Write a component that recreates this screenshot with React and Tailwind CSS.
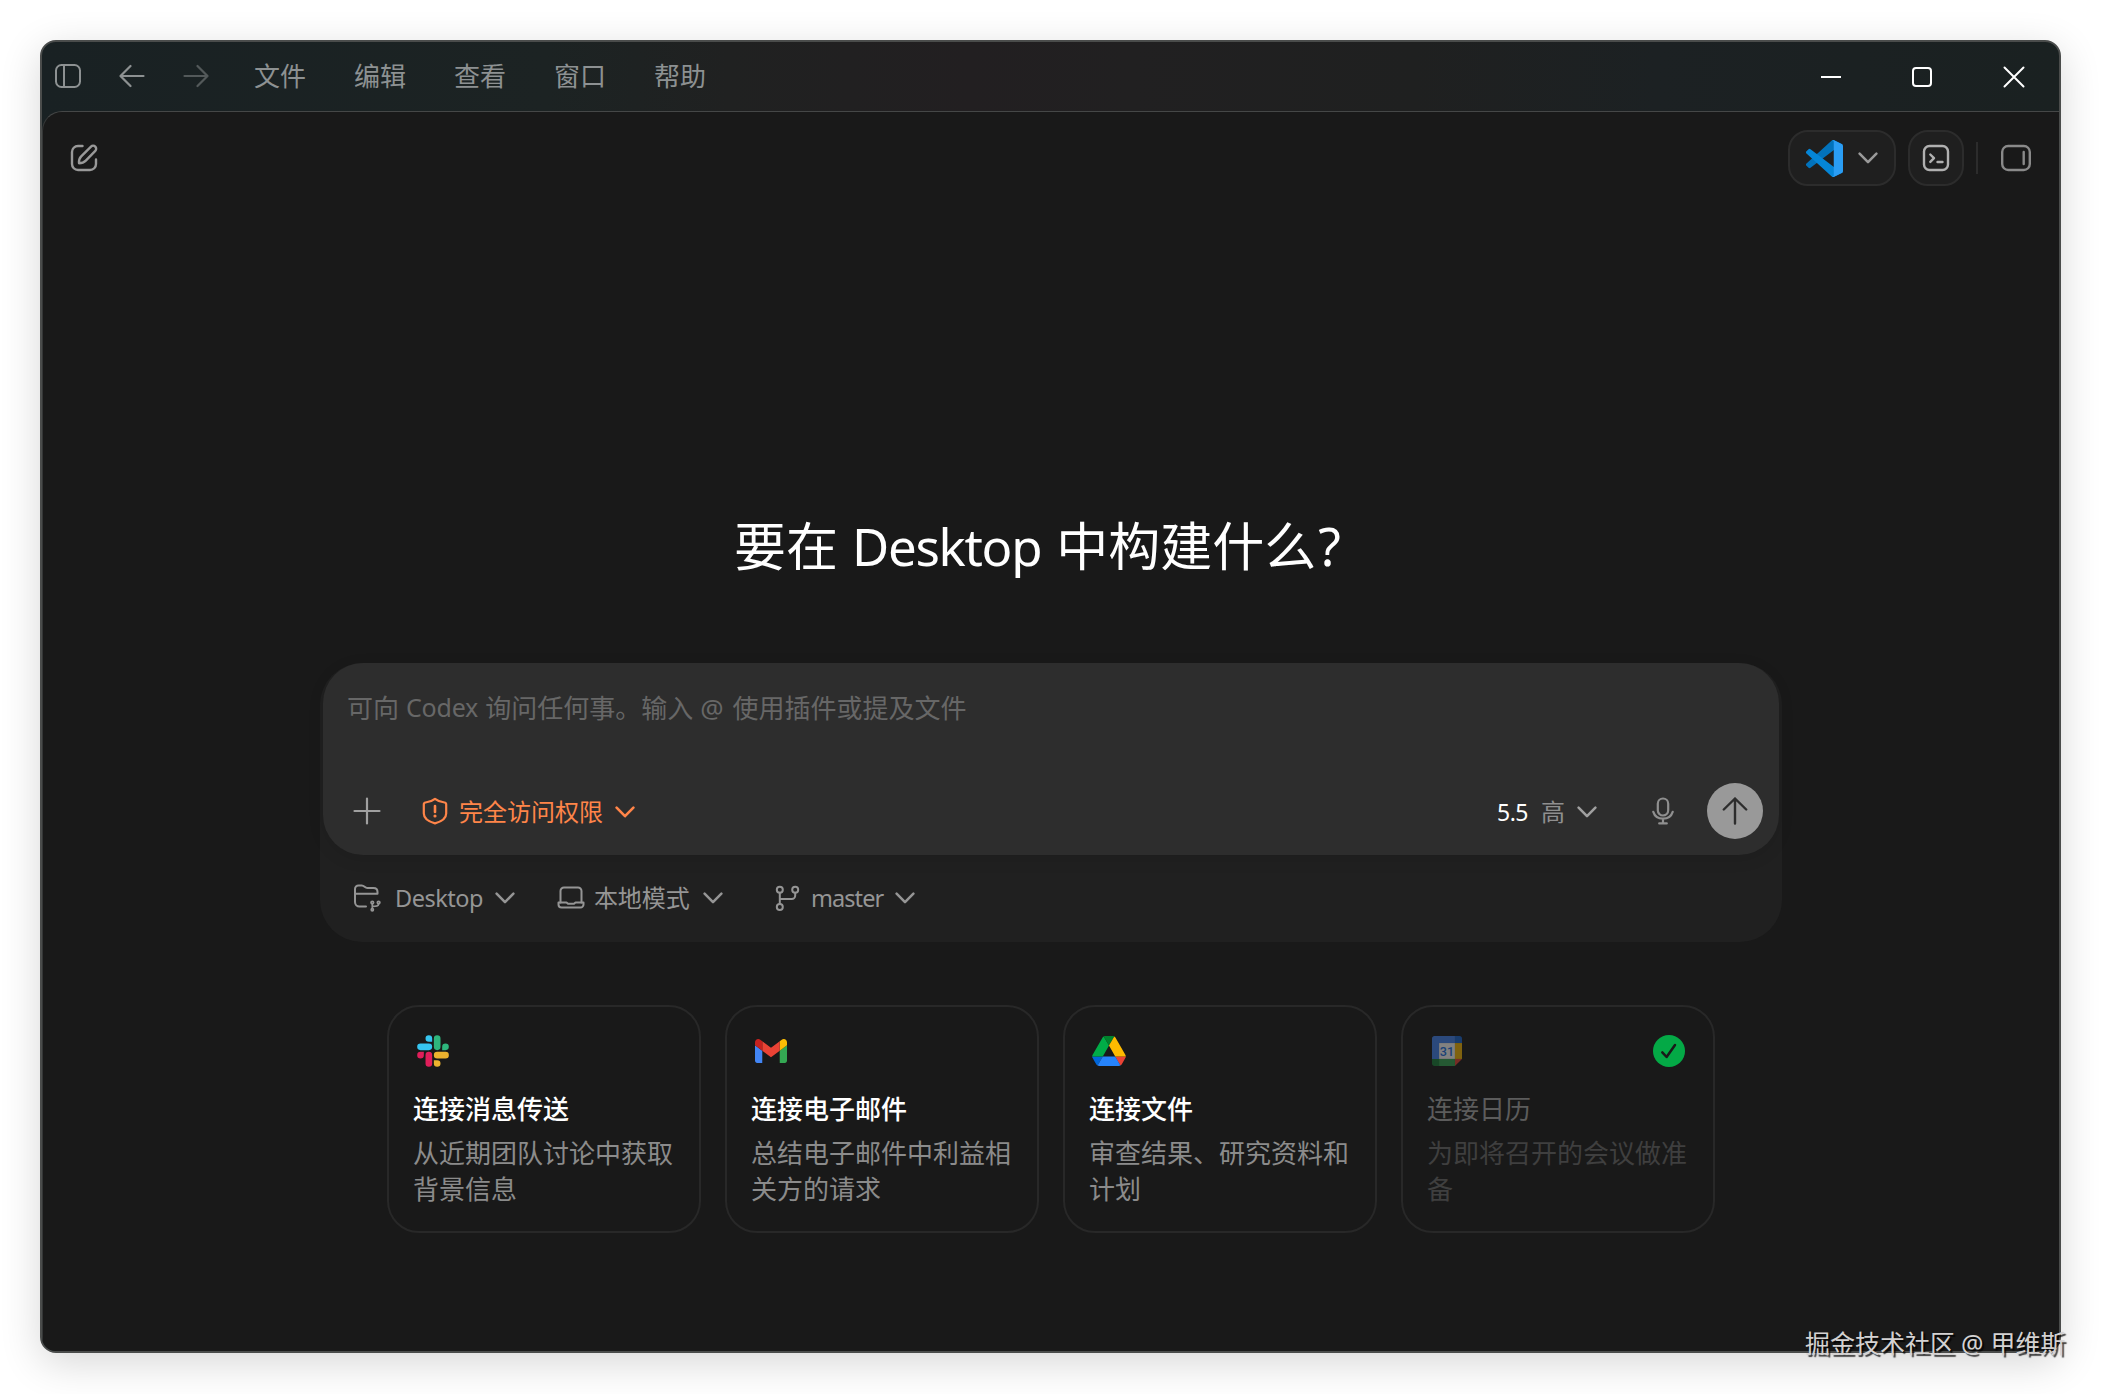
const CJK = "font-['Noto_Sans','Noto_Sans_CJK_SC',sans-serif]";

const Chevron = ({ w = 20, sw = 2.5, className = "" }) => (
  <svg width={w} height={w * 0.6} viewBox="0 0 20 12" fill="none" stroke="currentColor" strokeWidth={sw} strokeLinecap="round" strokeLinejoin="round" className={"shrink-0 " + className}>
    <path d="M1.6 1.6 10 10.2l8.400-8.600" />
  </svg>
);

const S = ({ w, h, children, sw = 2, className = "" }) => (
  <svg width={w} height={h} viewBox={`0 0 ${w} ${h}`} fill="none" stroke="currentColor" strokeWidth={sw} strokeLinecap="round" strokeLinejoin="round" className={"shrink-0 " + className}>
    {children}
  </svg>
);

const Sidebar = () => (
  <S w={28} h={26}>
    <rect x="2" y="2" width="24" height="22" rx="5.5" />
    <path d="M10 2v22" />
  </S>
);
const ArrowL = () => (
  <S w={26} h={24} sw={2.2}>
    <path d="M1.5 12h23M11.5 2 1.5 12l10 10" />
  </S>
);
const ArrowR = () => (
  <S w={26} h={24} sw={2.2}>
    <path d="M1.5 12h23M14.5 2l10 10-10 10" />
  </S>
);
const Compose = () => (
  <S w={30} h={30} sw={2.4}>
    <path d="M13.5 3H9a6 6 0 0 0-6 6v12a6 6 0 0 0 6 6h12a6 6 0 0 0 6-6v-4.5" />
    <path d="M10 20.200c-.3-3.200.5-5.200 2.200-6.900L22 3.600a2.900 2.900 0 0 1 4.300 4.200L16.800 17.600c-1.800 1.800-3.800 2.600-6.800 2.600z" />
  </S>
);
const VSCode = () => (
  <svg width="37" height="37" viewBox="0 0 100 100" className="shrink-0">
    <path fill="#0272bb" d="M96.500 10.800 75.900.9a6.200 6.200 0 0 0-7.100 1.200L1.300 63.600a4.200 4.200 0 0 0 0 6.200l5.500 5a4.200 4.200 0 0 0 5.400.2l81.200-61.600c2.700-2.100 6.600-.1 6.600 3.300v-.2a6.300 6.300 0 0 0-3.500-5.700z" />
    <path fill="#0585d6" d="m96.500 89.200-20.600 9.900a6.200 6.200 0 0 1-7.100-1.200L1.300 36.400a4.200 4.200 0 0 1 0-6.200l5.500-5a4.200 4.200 0 0 1 5.400-.2l81.200 61.600c2.700 2.100 6.600.1 6.600-3.300v.2a6.300 6.300 0 0 1-3.500 5.700z" />
    <path fill="#2a9df4" d="M75.900 99.100a6.200 6.200 0 0 1-7.100-1.200c2.300 2.300 6.200.7 6.200-2.600V4.700c0-3.300-3.900-4.900-6.200-2.600a6.200 6.200 0 0 1 7.100-1.200l20.600 9.900a6.300 6.300 0 0 1 3.500 5.700v67c0 2.400-1.400 4.600-3.500 5.700z" />
  </svg>
);
const Terminal = () => (
  <S w={28} h={28} sw={2.4}>
    <rect x="2" y="2" width="24" height="24" rx="5.500" />
    <path d="m8.300 10.500 3.700 3.700-3.700 3.700M15.500 18h5" />
  </S>
);
const RightPanel = () => (
  <S w={32} h={28} sw={2.400}>
    <rect x="2.200" y="2" width="27.600" height="24" rx="6" />
    <path d="M23.700 8v12" />
  </S>
);
const Shield = () => (
  <S w={26} h={28} sw={2.200}>
    <path d="M13 1.800c2.600 2 5.800 3.300 9.500 3.700 1 .1 1.700.9 1.700 1.900v9.100c0 4.700-4.500 8-11.200 9.900C6.300 24.500 1.800 21.200 1.800 16.500V7.400c0-1 .7-1.800 1.700-1.900C7.200 5.100 10.400 3.800 13 1.800z" />
    <path d="M13 9v6" strokeWidth="2.600" />
    <circle cx="13" cy="19" r=".9" fill="currentColor" strokeWidth="1.400" />
  </S>
);
const Mic = () => (
  <S w={22} h={28} sw={2.200}>
    <rect x="5.800" y="1.500" width="10.400" height="17" rx="5.200" />
    <path d="M1.300 14.800C2.600 19 6.200 21.600 11 21.600s8.400-2.600 9.700-6.800M11 21.600v4.800M7.200 26.400h7.600" />
  </S>
);
const Folder = () => (
  <S w={28} h={28}>
    <path d="M13 22.500H6.500A4.500 4.500 0 0 1 2 18V5a3.500 3.500 0 0 1 3.500-3.500h3.300c2.600 0 3 2.500 5.500 2.500h6.200c2.500 0 4 1.500 4 4v1.700H2" />
    <g strokeWidth="1.700">
      <circle cx="19.300" cy="18.600" r="1.300" />
      <circle cx="25.600" cy="18.600" r="1.300" />
      <circle cx="19.300" cy="25.800" r="1.100" />
      <path d="M19.300 20v4.500M25.600 20c0 2.200-2 2.400-6.200 2.400" />
    </g>
  </S>
);
const Laptop = () => (
  <S w={28} h={24}>
    <path d="M3.500 16.500V5A3.500 3.500 0 0 1 7 1.500h14A3.500 3.500 0 0 1 24.500 5v11.500" />
    <path d="M1.500 16.500h8l1.500 1.300h6l1.500-1.300h8v2a3 3 0 0 1-3 3h-19a3 3 0 0 1-3-3z" />
  </S>
);
const Branch = () => (
  <S w={25} h={27}>
    <circle cx="4.800" cy="4.800" r="3" />
    <circle cx="20.200" cy="4.800" r="3" />
    <circle cx="4.800" cy="22" r="3" />
    <path d="M4.800 7.800v11.200M20.200 7.800v2.700a3.500 3.500 0 0 1-3.500 3.500H4.800" />
  </S>
);

const Slack = () => (
  <svg width="32" height="32" viewBox="0 0 127 127" className="shrink-0">
    <path fill="#E01E5A" d="M27.200 80a13.200 13.200 0 1 1-13.200-13.200h13.200zM33.800 80a13.200 13.200 0 0 1 26.400 0v33a13.200 13.200 0 0 1-26.400 0z" />
    <path fill="#36C5F0" d="M47 27a13.200 13.200 0 1 1 13.200-13.200V27zM47 33.700a13.200 13.200 0 0 1 0 26.400H13.900a13.200 13.200 0 0 1 0-26.400z" />
    <path fill="#2EB67D" d="M99.900 46.900a13.200 13.200 0 1 1 13.200 13.200H99.900zM93.300 46.900a13.200 13.200 0 0 1-26.400 0V13.800a13.200 13.200 0 0 1 26.400 0z" />
    <path fill="#ECB22E" d="M80.100 99.800A13.200 13.200 0 1 1 66.900 113V99.800zM80.100 93.200a13.200 13.200 0 0 1 0-26.400h33.100a13.200 13.200 0 0 1 0 26.400z" />
  </svg>
);
const Gmail = () => (
  <svg width="32" height="24" viewBox="52 42 88 66" className="shrink-0">
    <path fill="#4285f4" d="M58 108h14V74L52 59v43c0 3.320 2.690 6 6 6" />
    <path fill="#34a853" d="M120 108h14c3.320 0 6-2.690 6-6V59l-20 15" />
    <path fill="#fbbc04" d="M120 48v26l20-15v-8c0-7.420-8.470-11.650-14.400-7.200" />
    <path fill="#ea4335" d="M72 74V48l24 18 24-18v26L96 92" />
    <path fill="#c5221f" d="M52 51v8l20 15V48l-5.600-4.200c-5.940-4.450-14.400-.22-14.400 7.200" />
  </svg>
);
const Drive = () => (
  <svg width="34" height="30" viewBox="0 0 87.3 78" className="shrink-0">
    <path fill="#0066da" d="m6.600 66.850 3.850 6.650c.8 1.400 1.950 2.500 3.300 3.300L27.500 53H0c0 1.550.4 3.100 1.200 4.500z" />
    <path fill="#00ac47" d="M43.650 25 29.900 1.200c-1.350.8-2.500 1.900-3.300 3.300l-25.400 44A9.060 9.060 0 0 0 0 53h27.500z" />
    <path fill="#ea4335" d="M73.550 76.800c1.350-.8 2.500-1.900 3.300-3.300l1.600-2.750L86.100 57.500c.8-1.400 1.200-2.950 1.200-4.500H59.800l5.850 11.500z" />
    <path fill="#00832d" d="M43.650 25 57.400 1.200C56.050.4 54.500 0 52.900 0H34.400c-1.600 0-3.150.45-4.500 1.200z" />
    <path fill="#2684fc" d="M59.800 53H27.500L13.750 76.800c1.350.8 2.900 1.200 4.500 1.200h50.800c1.600 0 3.150-.45 4.500-1.200z" />
    <path fill="#ffba00" d="m73.400 26.500-12.700-22c-.8-1.400-1.950-2.500-3.300-3.300L43.650 25 59.800 53h27.450c0-1.550-.4-3.100-1.200-4.500z" />
  </svg>
);
const Calendar = () => (
  <svg width="30" height="30" viewBox="0 0 200 200" className="shrink-0 opacity-45">
    <path fill="#fff" d="M47 47h106v106H47z" />
    <path fill="#EA4335" d="M153 200l47-47h-47z" />
    <path fill="#FBBC04" d="M200 47h-47v106h47z" />
    <path fill="#34A853" d="M153 153H47v47h106z" />
    <path fill="#188038" d="M0 153v31c0 9 7 16 16 16h31v-47z" />
    <path fill="#1967D2" d="M200 47V16c0-9-7-16-16-16h-31v47z" />
    <path fill="#4285F4" d="M153 0H16C7 0 0 7 0 16v137h47V47h106z" />
    <text x="100" y="130" fontSize="84" textAnchor="middle" fill="#1a73e8" fontFamily="Roboto, sans-serif" fontWeight="500">31</text>
  </svg>
);
const Check = () => (
  <svg width="32" height="32" viewBox="0 0 32 32" className="ml-auto mr-[4px] shrink-0">
    <circle cx="16" cy="16" r="16" fill="#04a946" />
    <path d="m9.300 17.300 4.300 4.700 8.400-12" fill="none" stroke="#191919" strokeWidth="2.500" strokeLinecap="round" strokeLinejoin="round" />
  </svg>
);

const cards = [
  { icon: <Slack />, pad: "pl-[4px]", title: "连接消息传送", lines: ["从近期团队讨论中获取", "背景信息"] },
  { icon: <Gmail />, pad: "pl-[4px]", title: "连接电子邮件", lines: ["总结电子邮件中利益相", "关方的请求"] },
  { icon: <Drive />, pad: "pl-[3px]", title: "连接文件", lines: ["审查结果、研究资料和", "计划"] },
  { icon: <Calendar />, pad: "pl-[5px]", title: "连接日历", lines: ["为即将召开的会议做准", "备"], done: true },
];

const menus = ["文件", "编辑", "查看", "窗口", "帮助"];

export default function App() {
  return (
    <div className={"relative h-[1394px] w-[2101px] overflow-hidden bg-white pl-[40px] pt-[40px] " + CJK}>
      <div className="flex h-[1313px] w-[2021px] flex-col overflow-hidden rounded-[16px] border-2 border-[#4a4c4b] bg-[linear-gradient(90deg,#192123_0%,#1c2323_25%,#202121_34%,#221f21_46%,#212021_54%,#1f2020_68%,#1c2123_80%,#1a2121_100%)] shadow-[0_10px_40px_rgba(0,0,0,0.16)]">
        <header className="flex h-[69px] shrink-0 items-center text-[#8d9192]">
          <div className="mb-[1px] ml-[12px]"><Sidebar /></div>
          <div className="mb-[1px] ml-[37px]"><ArrowL /></div>
          <div className="mb-[1px] ml-[38px] opacity-50"><ArrowR /></div>
          <nav className="mb-[2px] ml-[45px] flex gap-[48px] text-[26px] leading-[36px]">
            {menus.map((m) => <span key={m}>{m}</span>)}
          </nav>
          <div className="ml-auto mr-[34px] flex items-center text-white">
            <S w={22} h={22}><path d="M1 11h20" strokeLinecap="butt" /></S>
            <S w={22} h={22} className="ml-[69px]"><rect x="2" y="2" width="18" height="18" rx="3" /></S>
            <S w={22} h={22} className="ml-[70px]"><path d="m1.500 1.500 19 19M20.500 1.500l-19 19" /></S>
          </div>
        </header>

        <main className="flex flex-1 flex-col rounded-tl-[20px] border-t border-l border-t-[#454747] border-l-[#353737] bg-[#191919]">
          <div className="mt-[18px] flex h-[56px] items-center pl-[26px] pr-[27px] text-[#999999]">
            <Compose />
            <div className="ml-auto flex h-[56px] w-[108px] items-center rounded-[20px] border-2 border-[#2c2c2c] bg-[#1f1f1f] pl-[16px]">
              <VSCode />
              <Chevron w={20} className="ml-[15px]" />
            </div>
            <div className="ml-[12px] flex h-[56px] w-[56px] items-center justify-center rounded-[20px] border-2 border-[#2c2c2c] bg-[#1f1f1f] text-[#b0b0b0]">
              <Terminal />
            </div>
            <div className="ml-[12px] h-[32px] w-[2px] bg-[#2c2c2c]" />
            <div className="ml-[22px] text-[#8a8a8a]"><RightPanel /></div>
          </div>

          <h1 className="ml-[691px] mt-[324px] flex h-[72px] items-center whitespace-pre text-[52px] leading-[72px] text-white">
            <span>要在</span>
            <span className="ml-[14px] text-[51px] tracking-[-1.300px]">Desktop</span>
            <span className="ml-[15px]">中构建什么</span>
            <span className="ml-[2px]">?</span>
          </h1>

          <div className="ml-[277px] mt-[81px] w-[1462px] rounded-[42px] bg-[#202020] pb-[3px]">
            <div className="mx-[3px] h-[192px] w-[1456px] rounded-[40px] bg-[#2d2d2d] shadow-[0_4px_16px_rgba(0,0,0,0.10)]">
              <div className="flex h-[88px] items-center whitespace-pre pl-[24px] pt-[2px] text-[26px] text-[#676767]">
                <span>可向</span>
                <span className="ml-[7px] text-[25px] tracking-[-0.200px]">Codex</span>
                <span className="ml-[7px]">询问任何事。输入</span>
                <span className="ml-[7px] text-[26px]">@</span>
                <span className="ml-[9px]">使用插件或提及文件</span>
              </div>
              <div className="mt-[32px] flex h-[56px] items-center pl-[30px] pr-[16px] text-[24px] text-[#a0a0a0]">
                <S w={28} h={28} sw={2.200}><path d="M14 1.500v25M1.500 14h25" /></S>
                <div className="ml-[41px] flex items-center text-[#ff8549]">
                  <Shield />
                  <span className="ml-[11px] pt-[2px]">完全访问权限</span>
                  <Chevron className="ml-[12px] mt-[1px]" sw={2.600} />
                </div>
                <div className="ml-auto flex items-center pt-[2px]">
                  <span className="text-[23px] tracking-[-0.500px] text-white">5.5</span>
                  <span className="ml-[13px] text-[#8f8f8f]">高</span>
                  <Chevron className="ml-[12px]" />
                </div>
                <div className="ml-[55px] text-[#8f8f8f]"><Mic /></div>
                <div className="ml-[33px] flex h-[56px] w-[56px] items-center justify-center rounded-full bg-[#999999] text-[#2d2d2d]">
                  <S w={26} h={28} sw={2.400}><path d="M13 26.500v-25M1.800 12.500l11.200-11 11.200 11" /></S>
                </div>
              </div>
            </div>
            <div className="flex h-[84px] items-center pl-[33px] pt-[2px] text-[24px] text-[#959595]">
              <Folder />
              <span className="ml-[14px] pt-[2px] text-[23.500px] tracking-[-0.500px]">Desktop</span>
              <Chevron className="ml-[12px]" />
              <div className="ml-[42px]"><Laptop /></div>
              <span className="ml-[9px]">本地模式</span>
              <Chevron className="ml-[13px]" />
              <div className="ml-[52px]"><Branch /></div>
              <span className="ml-[11px] pt-[2px] text-[23.500px] tracking-[-0.900px]">master</span>
              <Chevron className="ml-[12px]" />
            </div>
          </div>

          <div className="ml-[344px] mt-[63px] grid w-[1328px] grid-cols-4 gap-[24px]">
            {cards.map((c) => (
              <section key={c.title} className="flex h-[228px] flex-col rounded-[32px] border-2 border-[#282828] px-[24px] pt-[28px]">
                <div className={"flex h-[32px] items-center " + c.pad}>
                  {c.icon}
                  {c.done && <Check />}
                </div>
                <h2 className={"mt-[24px] whitespace-nowrap text-[26px] leading-[36px] " + (c.done ? "text-[#5c5c5c]" : "font-medium text-white")}>{c.title}</h2>
                <p className={"mt-[8px] whitespace-nowrap text-[26px] leading-[36px] " + (c.done ? "text-[#3f3f3f]" : "text-[#8b8b8b]")}>
                  {c.lines[0]}<br />{c.lines[1]}
                </p>
              </section>
            ))}
          </div>
        </main>
      </div>
      <div className="absolute left-[1805px] top-[1325px] flex whitespace-pre text-[25px] leading-[36px] text-[#d4d2d2] [text-shadow:2px_2px_1px_rgba(0,0,0,0.75)]">
        <span>掘金技术社区</span>
        <span className="ml-[6px]">@</span>
        <span className="ml-[7px]">甲维斯</span>
      </div>
    </div>
  );
}
